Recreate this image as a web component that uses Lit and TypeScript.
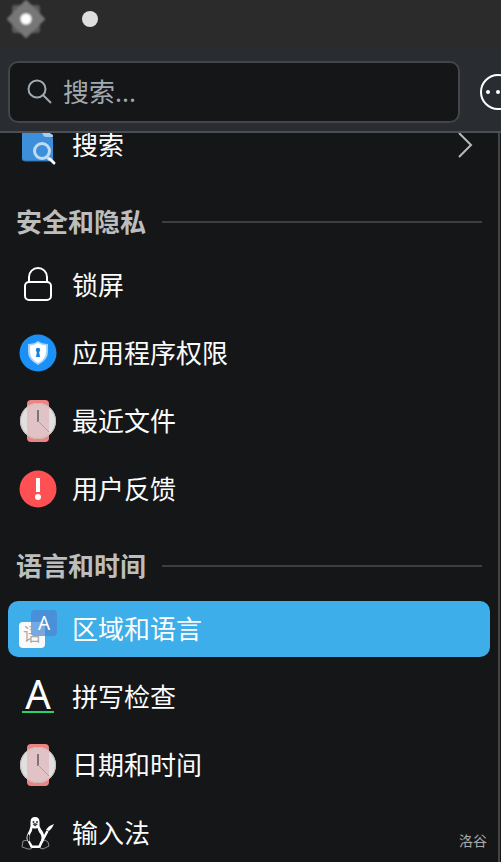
import { LitElement, html, css, svg } from "lit";
import { customElement, state } from "lit/decorators.js";

const watch = svg`
  <rect x="9" y="1" width="22" height="42" rx="4" fill="#ed8383"/>
  <circle cx="20" cy="22" r="18" fill="#e0e0e0"/>
  <path d="M9 7.750A18 18 0 0 1 31 7.750V36.250A18 18 0 0 1 9 36.250Z" fill="#e2c3c5"/>
  <circle cx="20" cy="22" r="17.500" fill="none" stroke="#c9b8b8" stroke-width="1"/>
  <path d="M20 11v12" stroke="#777" stroke-width="2"/>
  <path d="M20 22l11 11" stroke="#cf8f92" stroke-width="1"/>`;

const icons: Record<string, unknown> = {
  search: svg`
    <path d="M4 4h20l11 11v20q0 3-3 3H7q-3 0-3-3z" fill="#3d8fd9"/>
    <path d="M4 35q0 3 3 3h25q3 0 3-3" fill="none" stroke="#2a6eae" stroke-width="1"/>
    <path d="M22 4L35 12v2h-7q-2 0-3-2z" fill="#a9cdf0"/>
    <circle cx="24" cy="28" r="7.500" fill="#3d8fd9" stroke="#c0dbf4" stroke-width="3"/>
    <path d="M29 34l3 3" stroke="#c0dbf4" stroke-width="3"/>
    <path d="M32 36l4 4" stroke="#fff" stroke-width="3" stroke-linecap="round"/>`,
  lock: svg`
    <rect x="7" y="19" width="26" height="18" rx="4" fill="none" stroke="#fff" stroke-width="2"/>
    <path d="M11 19v-5a9 9 0 0 1 18 0v5" fill="none" stroke="#fff" stroke-width="2"/>`,
  shield: svg`
    <circle cx="20" cy="22" r="18.500" fill="#1b90f7"/>
    <path d="M20 10q4 3 10 3v8q0 8-10 13q-10-5-10-13v-8q6 0 10-3z" fill="#a8d4fb"/>
    <path d="M20 12q4 2 8 2.500v7q0 6-8 10.500q-8-4.500-8-10.500v-7q4-.5 8-2.500z" fill="#fff"/>
    <circle cx="20" cy="19" r="2.200" fill="#1681e0"/>
    <path d="M19 20h2l1 6h-4z" fill="#1681e0"/>`,
  watch,
  alert: svg`
    <circle cx="20" cy="22" r="18.500" fill="#ff5153"/>
    <path d="M18 11h4v14h-4z" fill="#fff"/>
    <circle cx="20" cy="30" r="3" fill="#fff"/>`,
  language: svg`
    <rect x="1" y="15" width="26" height="26" rx="4" fill="#fafafa"/>
    <text x="14" y="34" text-anchor="middle" class="cjk">语</text>
    <rect x="13" y="3" width="26" height="26" rx="4" fill="#4a90d9"/>
    <path d="M13 15h10q4 0 4 4v10h-10q-4 0-4-4z" fill="#77a9e0"/>
    <text x="26" y="23" text-anchor="middle" class="latin small">A</text>`,
  spell: svg`
    <text x="20" y="34" text-anchor="middle" class="latin large">A</text>
    <path d="M4 37h32" stroke="#27d367" stroke-width="2"/>`,
  penguin: svg`
    <path d="M10 29l-5 1-1 6 6 2h3l2-3-3-5z" fill="none" stroke="#8d8d8d" stroke-width="1"/>
    <path d="M24 31l-2 6 3 1 6-3-1-4-3-2z" fill="none" stroke="#8d8d8d" stroke-width="1"/>
    <path d="M12.500 11q0-5 4.500-5t4.500 5v4q1 3 3.500 6q2 4 1 7l-3 7q0 2-3 2h-5q-3 0-3-2l-3-6q-1-2 0-5q3-5 3.500-9z" fill="#fff"/>
    <path d="M14.500 17q2 1 5 0q1 4 3 6q2 4 0 8l-2 3.500h-6l-3-5q-1-3 1-7q2-3 2-5.500z" fill="#141618"/>
    <path d="M10 23l1.500 1q-1 3 0 6l-1 .5q-2-3-.5-7.500z" fill="#141618"/>
    <circle cx="15.500" cy="11" r="1" fill="#333"/>
    <circle cx="19" cy="11" r="1" fill="#333"/>
    <path d="M14.500 13l2.500-1 3 1-3 2.500z" fill="#444"/>
    <path d="M22.500 33l7-13" stroke="#fff" stroke-width="2.500"/>
    <path d="M28 19q2-4 8-6q-2 5-5 7z" fill="#fff"/>`,
};

interface Item { label: string; icon: string; more?: boolean }
interface Section { title?: string; items: Item[] }

const sections: Section[] = [
  { items: [{ label: "搜索", icon: "search", more: true }] },
  {
    title: "安全和隐私",
    items: [
      { label: "锁屏", icon: "lock" },
      { label: "应用程序权限", icon: "shield" },
      { label: "最近文件", icon: "watch" },
      { label: "用户反馈", icon: "alert" },
    ],
  },
  {
    title: "语言和时间",
    items: [
      { label: "区域和语言", icon: "language" },
      { label: "拼写检查", icon: "spell" },
      { label: "日期和时间", icon: "watch" },
      { label: "输入法", icon: "penguin" },
    ],
  },
];

@customElement("app-root")
export class AppRoot extends LitElement {
  @state() private selected = "区域和语言";

  static styles = css`
    :host {
      display: flex;
      flex-direction: column;
      position: relative;
      height: 100vh;
      overflow: hidden;
      background: #141618;
      color: #fcfcfc;
      font-family: "Noto Sans", "Noto Sans CJK SC", sans-serif;
      font-size: 26px;
      line-height: 40px;
    }
    * { box-sizing: border-box; }
    svg { display: block; flex: none; }
    button { font: inherit; color: inherit; border: 0; padding: 0; background: none; }
    .titlebar {
      flex: none;
      display: flex;
      align-items: flex-start;
      gap: 36px;
      height: 50px;
      padding-left: 6px;
      background: linear-gradient(#2b2b2b 46px, #292c30);
    }
    .dot { width: 16px; height: 16px; margin-top: 11px; border-radius: 50%; background: #dedede; }
    .toolbar {
      flex: none;
      display: flex;
      align-items: center;
      gap: 20px;
      height: 83px;
      padding: 3px 0 0 8px;
      background: #292c30;
      border-bottom: 2px solid #4b4f54;
    }
    .field {
      flex: 1;
      min-width: 0;
      display: flex;
      align-items: center;
      gap: 10px;
      height: 62px;
      padding: 0 17px;
      background: #141618;
      border: 2px solid #434547;
      border-radius: 10px;
    }
    input {
      flex: 1;
      min-width: 0;
      height: 40px;
      padding: 0;
      border: 0;
      outline: 0;
      background: none;
      color: inherit;
      font: inherit;
    }
    input::placeholder { color: #a1a9b1; opacity: 1; }
    .menu { width: 21px; height: 36px; overflow: hidden; }
    .body {
      flex: 1;
      min-height: 0;
      overflow: hidden;
      margin-right: 1px;
      padding: 0 8px;
      border-right: 2px solid #434547;
    }
    .list { display: flex; flex-direction: column; gap: 12px; margin-top: -16px; }
    .section { display: flex; flex-direction: column; gap: 12px; }
    .heading {
      display: flex;
      align-items: center;
      gap: 16px;
      height: 60px;
      margin: 0;
      padding: 14px 8px 0;
      color: #bdbdbd;
      font-size: 26px;
      font-weight: 700;
    }
    .heading::after { content: ""; flex: 1; height: 2px; background: #3c3f42; }
    .row {
      display: flex;
      align-items: center;
      gap: 14px;
      width: 100%;
      height: 56px;
      padding: 0 16px 0 10px;
      border-radius: 10px;
      text-align: left;
    }
    .row.active { background: #3daee9; }
    .label { flex: 1; }
    .latin { font-family: "Noto Sans", sans-serif; fill: #fff; }
    .small { font-size: 19px; }
    .large { font-size: 40px; }
    .cjk { font-family: "Noto Sans CJK SC", sans-serif; font-size: 18px; fill: #aaa; }
    .mark {
      position: absolute;
      right: 14px;
      bottom: 11px;
      font-size: 14px;
      line-height: 20px;
      color: #a9a9a9;
    }
  `;

  private row(item: Item) {
    return html`
      <button
        class="row ${item.label === this.selected ? "active" : ""}"
        @click=${() => (this.selected = item.label)}
      >
        <svg width="40" height="44" viewBox="0 0 40 44" aria-hidden="true">${icons[item.icon]}</svg>
        <span class="label">${item.label}</span>
        ${item.more
          ? html`<svg width="18" height="28" viewBox="0 0 18 28" aria-hidden="true">
              <path d="M3 2l12 12L3 26" fill="none" stroke="#b8b9ba" stroke-width="2" />
            </svg>`
          : ""}
      </button>`;
  }

  render() {
    return html`
      <header class="titlebar">
        <svg width="40" height="40" viewBox="0 0 40 40" aria-hidden="true">
          <defs>
            <filter id="soft"><feGaussianBlur stdDeviation="0.8" /></filter>
          </defs>
          <g filter="url(#soft)">
            <rect x="6" y="5" width="28" height="28" rx="3" fill="#5b5b5b" />
            <path d="M20 1L38 19L20 37L2 19Z" fill="#777" stroke="#777" stroke-width="2" stroke-linejoin="round" />
            <circle cx="20" cy="19" r="5.500" fill="#fff" />
          </g>
        </svg>
        <span class="dot"></span>
      </header>
      <div class="toolbar">
        <label class="field">
          <svg width="26" height="26" viewBox="0 0 26 26" aria-hidden="true">
            <g fill="none" stroke="#a1a9b1" stroke-width="2">
              <circle cx="10" cy="10" r="8.500" />
              <path d="M16 16l8 8" />
            </g>
          </svg>
          <input type="text" placeholder="搜索..." aria-label="搜索" />
        </label>
        <button class="menu" aria-label="菜单">
          <svg width="36" height="36" viewBox="0 0 36 36" aria-hidden="true">
            <circle cx="18" cy="18" r="17" fill="none" stroke="#fff" stroke-width="2" />
            <g fill="#fff">
              <circle cx="8" cy="18" r="2" /><circle cx="18" cy="18" r="2" /><circle cx="28" cy="18" r="2" />
            </g>
          </svg>
        </button>
      </div>
      <main class="body">
        <nav class="list">
          ${sections.map(
            (s) => html`<section class="section">
              ${s.title ? html`<h2 class="heading">${s.title}</h2>` : ""}
              ${s.items.map((i) => this.row(i))}
            </section>`
          )}
        </nav>
      </main>
      <span class="mark">洛谷</span>
    `;
  }
}
